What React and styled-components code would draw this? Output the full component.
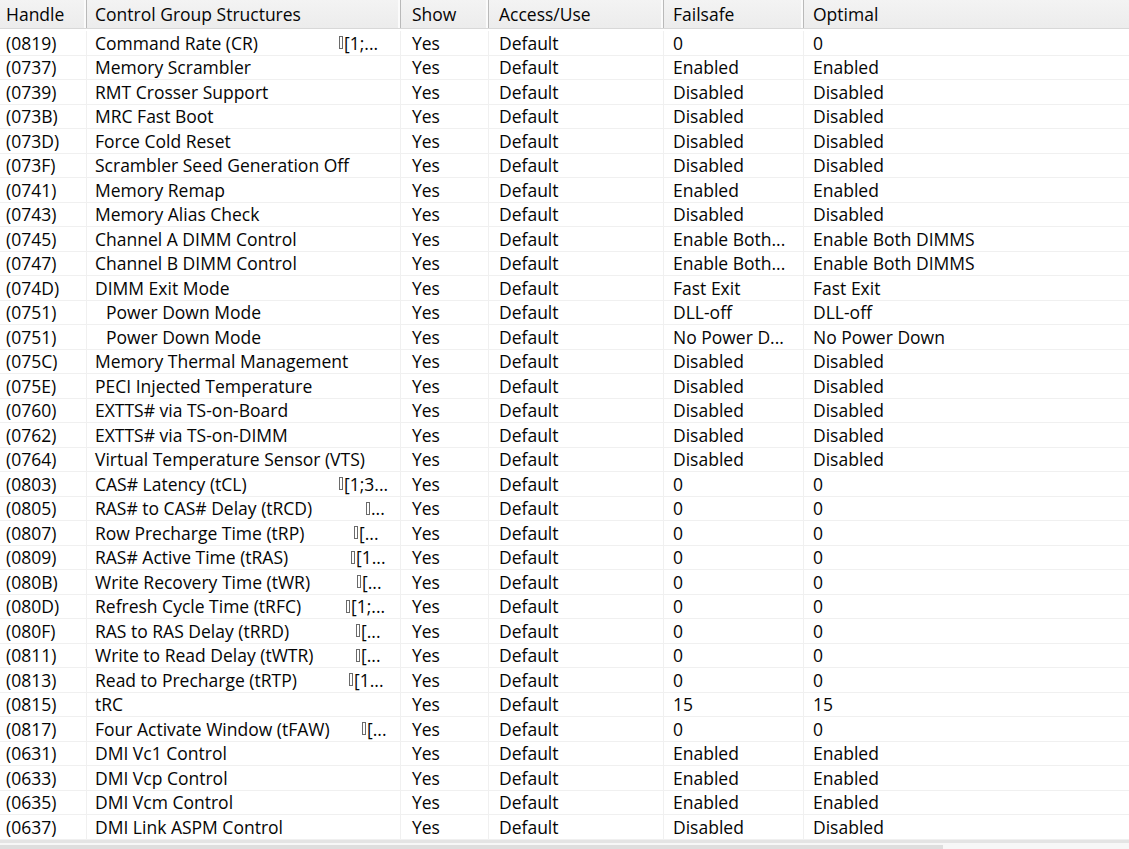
import React from "react";
import styled, { createGlobalStyle } from "styled-components";

const Global = createGlobalStyle`
  html, body { margin: 0; padding: 0; background: #ffffff; }
  body { font-family: "Open Sans", "Noto Sans", "Liberation Sans", sans-serif; }
`;

const COLS = "87px 314px 88px 175px 140px 1fr";

const Window = styled.div`
  width: 1129px;
  height: 849px;
  overflow: hidden;
  display: flex;
  flex-direction: column;
  background: #fff;
  color: #050505;
  font-size: 17.5px;
`;

const Header = styled.div`
  display: grid;
  grid-template-columns: ${COLS};
  height: 28px;
  background: linear-gradient(#f3f3f3, #ececec);
  border-bottom: 1px solid #d8d8d8;
  flex: none;
`;

const HeadCell = styled.div`
  display: flex;
  align-items: center;
  padding-left: ${(p) => p.$pad}px;
  border-right: 1px solid #b9b9b9;
  box-shadow: inset -2px 0 0 #fbfbfb;
  white-space: nowrap;
  overflow: hidden;
  &:last-child { border-right: none; box-shadow: none; }
`;

const Body = styled.div`
  flex: 1;
  padding-top: 2px;
  overflow: hidden;
`;

const Row = styled.div`
  display: grid;
  grid-template-columns: ${COLS};
  height: 24.5px;
  box-sizing: border-box;
  border-bottom: 1px solid #f0f0f0;
`;

const Cell = styled.div`
  display: flex;
  align-items: center;
  padding-left: ${(p) => p.$pad}px;
  border-right: 1px solid #f0f0f0;
  white-space: nowrap;
  overflow: hidden;
  &:last-child { border-right: none; }
`;

const Label = styled.span`
  display: inline-block;
  padding-left: ${(p) => (p.$indent ? 11 : 0)}px;
  width: ${(p) => (p.$w ? `${p.$w}px` : "auto")};
  flex: none;
`;

const Suffix = styled.span`
  display: inline-flex;
  align-items: center;
`;

const Tofu = styled.span`
  display: inline-block;
  width: 2px;
  height: 11px;
  border: 1px solid #6a6a6a;
  margin-right: 1px;
`;

const ScrollBar = styled.div`
  flex: none;
  height: 9px;
  box-sizing: border-box;
  border-top: 3px solid #e4e4e4;
  background: #f7f7f7;
  display: flex;
  align-items: flex-end;
`;

const Thumb = styled.div`
  width: 943px;
  height: 4px;
  background: #dedede;
`;

const PADS = [6, 8, 11, 10, 9, 9];
const HEADS = ["Handle", "Control Group Structures", "Show", "Access/Use", "Failsafe", "Optimal"];

const rows = [
  ["(0819)", "Command Rate (CR)", "0", "0", 340, "[1;..."],
  ["(0737)", "Memory Scrambler", "Enabled", "Enabled"],
  ["(0739)", "RMT Crosser Support", "Disabled", "Disabled"],
  ["(073B)", "MRC Fast Boot", "Disabled", "Disabled"],
  ["(073D)", "Force Cold Reset", "Disabled", "Disabled"],
  ["(073F)", "Scrambler Seed Generation Off", "Disabled", "Disabled"],
  ["(0741)", "Memory Remap", "Enabled", "Enabled"],
  ["(0743)", "Memory Alias Check", "Disabled", "Disabled"],
  ["(0745)", "Channel A DIMM Control", "Enable Both...", "Enable Both DIMMS"],
  ["(0747)", "Channel B DIMM Control", "Enable Both...", "Enable Both DIMMS"],
  ["(074D)", "DIMM Exit Mode", "Fast Exit", "Fast Exit"],
  ["(0751)", "Power Down Mode", "DLL-off", "DLL-off", 0, null, true],
  ["(0751)", "Power Down Mode", "No Power D...", "No Power Down", 0, null, true],
  ["(075C)", "Memory Thermal Management", "Disabled", "Disabled"],
  ["(075E)", "PECI Injected Temperature", "Disabled", "Disabled"],
  ["(0760)", "EXTTS# via TS-on-Board", "Disabled", "Disabled"],
  ["(0762)", "EXTTS# via TS-on-DIMM", "Disabled", "Disabled"],
  ["(0764)", "Virtual Temperature Sensor (VTS)", "Disabled", "Disabled"],
  ["(0803)", "CAS# Latency (tCL)", "0", "0", 340, "[1;3..."],
  ["(0805)", "RAS# to CAS# Delay (tRCD)", "0", "0", 367, "..."],
  ["(0807)", "Row Precharge Time (tRP)", "0", "0", 355, "[..."],
  ["(0809)", "RAS# Active Time (tRAS)", "0", "0", 352, "[1..."],
  ["(080B)", "Write Recovery Time (tWR)", "0", "0", 358, "[..."],
  ["(080D)", "Refresh Cycle Time (tRFC)", "0", "0", 347, "[1;..."],
  ["(080F)", "RAS to RAS Delay (tRRD)", "0", "0", 357, "[..."],
  ["(0811)", "Write to Read Delay (tWTR)", "0", "0", 357, "[..."],
  ["(0813)", "Read to Precharge (tRTP)", "0", "0", 350, "[1..."],
  ["(0815)", "tRC", "15", "15"],
  ["(0817)", "Four Activate Window (tFAW)", "0", "0", 363, "[..."],
  ["(0631)", "DMI Vc1 Control", "Enabled", "Enabled"],
  ["(0633)", "DMI Vcp Control", "Enabled", "Enabled"],
  ["(0635)", "DMI Vcm Control", "Enabled", "Enabled"],
  ["(0637)", "DMI Link ASPM Control", "Disabled", "Disabled"],
];

export default function App() {
  return (
    <Window>
      <Global />
      <Header>
        {HEADS.map((h, i) => (
          <HeadCell key={h} $pad={PADS[i]}>{h}</HeadCell>
        ))}
      </Header>
      <Body>
        {rows.map(([handle, name, fail, opt, sx, suf, indent], i) => (
          <Row key={i}>
            <Cell $pad={PADS[0]}>{handle}</Cell>
            <Cell $pad={PADS[1]}>
              <Label $w={sx ? sx - 96 : 0} $indent={indent}>{name}</Label>
              {suf && (
                <Suffix>
                  <Tofu />
                  {suf}
                </Suffix>
              )}
            </Cell>
            <Cell $pad={PADS[2]}>Yes</Cell>
            <Cell $pad={PADS[3]}>Default</Cell>
            <Cell $pad={PADS[4]}>{fail}</Cell>
            <Cell $pad={PADS[5]}>{opt}</Cell>
          </Row>
        ))}
      </Body>
      <ScrollBar>
        <Thumb />
      </ScrollBar>
    </Window>
  );
}
